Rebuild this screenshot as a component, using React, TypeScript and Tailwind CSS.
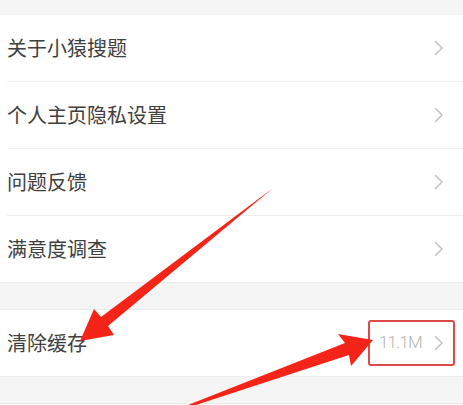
import React from "react";

const Chevron = () => (
  <svg width="10" height="16" viewBox="0 0 10 16" className="shrink-0">
    <polyline points="1.5,1.5 8,8 1.5,14.5" fill="none" stroke="#c4c4c4" strokeWidth="1.6" strokeLinecap="round" strokeLinejoin="round" />
  </svg>
);

const Row = ({ label, last }: { label: string; last?: boolean }) => (
  <div className="flex flex-col">
    <div className="h-[66px] flex items-center justify-between pl-[7px] pr-[19px]">
      <span className="text-[20px] text-[#404040]">{label}</span>
      <Chevron />
    </div>
    {!last && <div className="ml-[7px] h-px bg-[#ededed]" />}
  </div>
);

export default function App() {
  return (
    <div
      className="relative w-[463px] h-[405px] overflow-hidden bg-[#f5f5f5]"
      style={{ fontFamily: '"Noto Sans CJK SC", "Noto Sans", sans-serif' }}
    >
      <div className="h-[15px]" />
      <div className="bg-white border-b border-[#ececec]">
        <Row label="关于小猿搜题" />
        <Row label="个人主页隐私设置" />
        <Row label="问题反馈" />
        <Row label="满意度调查" last />
      </div>
      <div className="h-[26px]" />
      <div className="bg-white border-y border-[#ececec] h-[68px] flex items-center justify-between pl-[7px] pr-[8px]">
        <span className="text-[20px] text-[#404040]">清除缓存</span>
        <div className="flex items-center gap-[12px] h-[46px] pl-[9px] pr-[9px] border-2 border-[#dc4a48] rounded-[3px]">
          <span className="text-[17px] font-light text-[#b4b4b4] tracking-[-0.8px]" style={{ fontFamily: 'Roboto, sans-serif' }}>11.1M</span>
          <Chevron />
        </div>
      </div>
      <div className="h-[26px]" />
      <div className="bg-white h-[10px] border-t border-[#ececec]" />

      <svg className="absolute inset-0 pointer-events-none" width="463" height="405" viewBox="0 0 463 405">
        <polygon points="273,188 108,326 114,335 80,341 94,309 101,317" fill="#f52419" />
        <polygon points="150,420 345,343 338,334 373,340 351,366 349,355" fill="#f52419" />
      </svg>
    </div>
  );
}
